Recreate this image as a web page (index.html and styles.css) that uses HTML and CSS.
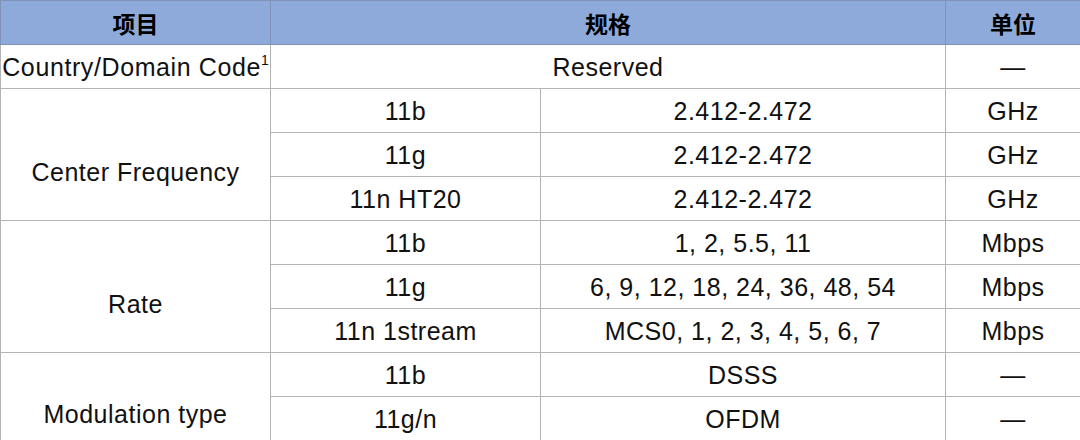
FILE: index.html
```html
<!DOCTYPE html>
<html lang="zh">
<head>
<meta charset="utf-8">
<link rel="stylesheet" href="styles.css">
</head>
<body>
<table class="spec">
  <colgroup>
    <col class="c1"><col class="c2"><col class="c3"><col class="c4">
  </colgroup>
  <thead>
    <tr><th>项目</th><th colspan="2">规格</th><th>单位</th></tr>
  </thead>
  <tbody>
    <tr><td class="tight">Country/Domain Code<sup>1</sup></td><td colspan="2">Reserved</td><td>—</td></tr>
    <tr><td rowspan="3" class="group">Center Frequency</td><td>11b</td><td>2.412-2.472</td><td>GHz</td></tr>
    <tr><td>11g</td><td>2.412-2.472</td><td>GHz</td></tr>
    <tr><td>11n HT20</td><td>2.412-2.472</td><td>GHz</td></tr>
    <tr><td rowspan="3" class="group">Rate</td><td>11b</td><td>1, 2, 5.5, 11</td><td>Mbps</td></tr>
    <tr><td>11g</td><td>6, 9, 12, 18, 24, 36, 48, 54</td><td>Mbps</td></tr>
    <tr><td>11n 1stream</td><td>MCS0, 1, 2, 3, 4, 5, 6, 7</td><td>Mbps</td></tr>
    <tr><td rowspan="2" class="group">Modulation type</td><td>11b</td><td>DSSS</td><td>—</td></tr>
    <tr><td>11g/n</td><td>OFDM</td><td>—</td></tr>
  </tbody>
</table>
</body>
</html>
```
FILE: styles.css
```css
html, body {
  margin: 0;
  padding: 0;
  background: #ffffff;
}
.spec {
  width: 1080px;
  border-collapse: collapse;
  table-layout: fixed;
  font-family: "Liberation Sans", Arial, "Noto Sans CJK SC", sans-serif;
  font-size: 25px;
  letter-spacing: 0.5px;
  color: #111111;
}
.c1 { width: 270px; }
.c2 { width: 270px; }
.c3 { width: 405px; }
.c4 { width: 135px; }
.spec th,
.spec td {
  border: 1px solid #b3b3b3;
  height: 44px;
  padding: 0;
  text-align: center;
  vertical-align: middle;
  line-height: 28px;
  box-sizing: border-box;
  white-space: nowrap;
}
.spec th {
  background: #8eaadb;
  font-family: "Noto Sans CJK SC", sans-serif;
  font-weight: 700;
  font-size: 23px;
  letter-spacing: 0;
  color: #000000;
  border-color: #7f93b8;
}
.spec td.tight {
  letter-spacing: 0.6px;
}
.spec sup {
  font-size: 14px;
  line-height: 0;
  vertical-align: 11px;
  letter-spacing: 0;
}
.spec td.group {
  padding-top: 34px;
}
```
